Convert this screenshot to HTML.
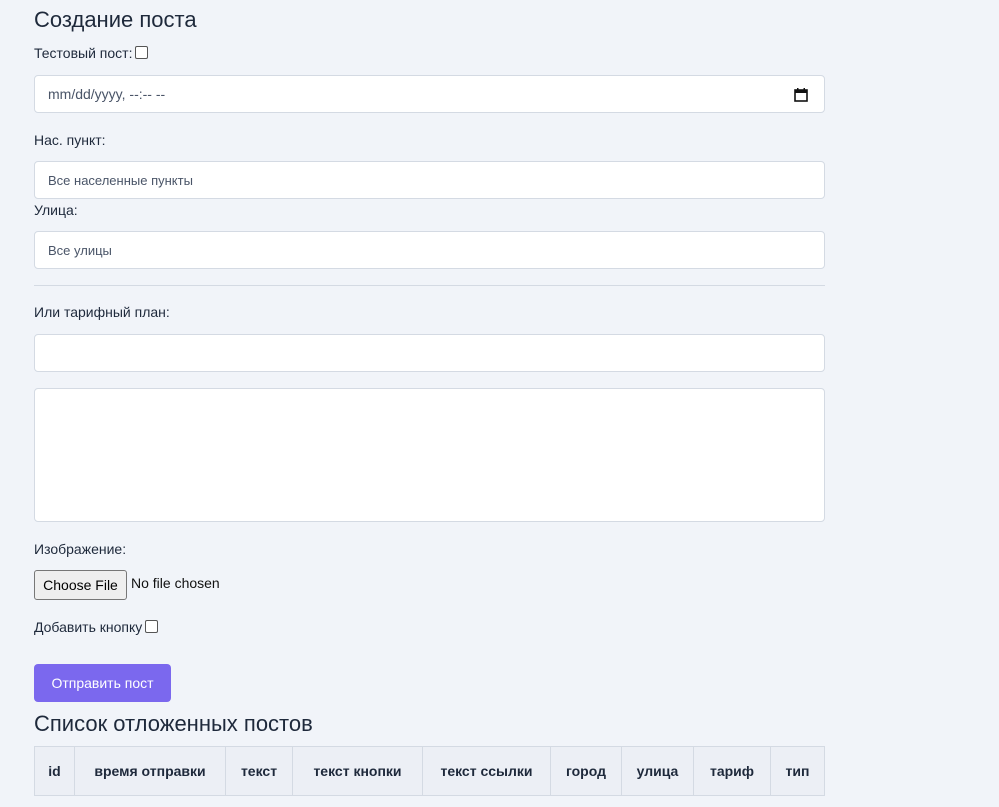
<!DOCTYPE html>
<html><head><meta charset="utf-8"><style>
body{margin:0;width:999px;height:807px;background:#f1f4f9;font-family:"Liberation Sans",sans-serif;color:#1e293b;position:relative;overflow:hidden}
.a{position:absolute}
h2{margin:0;font-weight:400;font-size:22px;position:absolute;left:34px}
.lbl{position:absolute;left:34px;font-size:14px}
.inp{position:absolute;left:34px;width:791px;background:#fff;border:1px solid #d4dae3;border-radius:4px;box-sizing:border-box}
.ph{position:absolute;left:13px;font-size:13px;color:#4a5568}
.cb{display:inline-block;width:11px;height:11px;border:1px solid #555;border-radius:2px;background:#fff;vertical-align:-1px;margin-left:3px}
table{position:absolute;left:34px;top:746px;border-collapse:collapse;font-size:14px;font-weight:bold}
th{background:#eceff5;border:1px solid #d4dae3;height:48px;padding:0;text-align:center}
</style></head><body>
<h2 style="top:7px">Создание поста</h2>
<div class="lbl" style="top:45px">Тестовый пост:<span class="cb"></span></div>
<div class="inp" style="top:75px;height:38px"><span class="ph" style="top:10px;font-size:14px">mm/dd/yyyy, --:-- --</span>
<svg class="a" style="left:758px;top:11px" width="16" height="16" viewBox="0 0 16 16"><rect x="2" y="3" width="12" height="11" fill="none" stroke="#111" stroke-width="1.6"/><rect x="2" y="3" width="12" height="3" fill="#111"/><rect x="4" y="1" width="1.5" height="3" fill="#111"/><rect x="10.5" y="1" width="1.5" height="3" fill="#111"/></svg></div>
<div class="lbl" style="top:132px">Нас. пункт:</div>
<div class="inp" style="top:161px;height:38px"><span class="ph" style="top:11px">Все населенные пункты</span></div>
<div class="lbl" style="top:202px">Улица:</div>
<div class="inp" style="top:231px;height:38px"><span class="ph" style="top:11px">Все улицы</span></div>
<div class="a" style="left:34px;top:285px;width:791px;height:1px;background:#d4dae3"></div>
<div class="lbl" style="top:304px">Или тарифный план:</div>
<div class="inp" style="top:334px;height:38px"></div>
<div class="inp" style="top:388px;height:134px"></div>
<div class="lbl" style="top:541px">Изображение:</div>
<div class="a" style="left:34px;top:570px;width:93px;height:30px;border:1px solid #777;border-radius:3px;background:#efefef;box-sizing:border-box;font-size:14px;text-align:center;line-height:28px;color:#000">Choose File</div>
<div class="a" style="left:131px;top:575px;font-size:14px;color:#111">No file chosen</div>
<div class="lbl" style="top:619px">Добавить кнопку<span class="cb"></span></div>
<div class="a" style="left:34px;top:664px;width:137px;height:38px;background:#7b68ee;border-radius:4px;color:#fff;font-size:14px;text-align:center;line-height:38px">Отправить пост</div>
<h2 style="top:711px">Список отложенных постов</h2>
<table><tr>
<th style="width:39px">id</th><th style="width:150px">время отправки</th><th style="width:66px">текст</th><th style="width:129px">текст кнопки</th><th style="width:127px">текст ссылки</th><th style="width:70px">город</th><th style="width:71px">улица</th><th style="width:76px">тариф</th><th style="width:53px">тип</th>
</tr></table>
</body></html>
